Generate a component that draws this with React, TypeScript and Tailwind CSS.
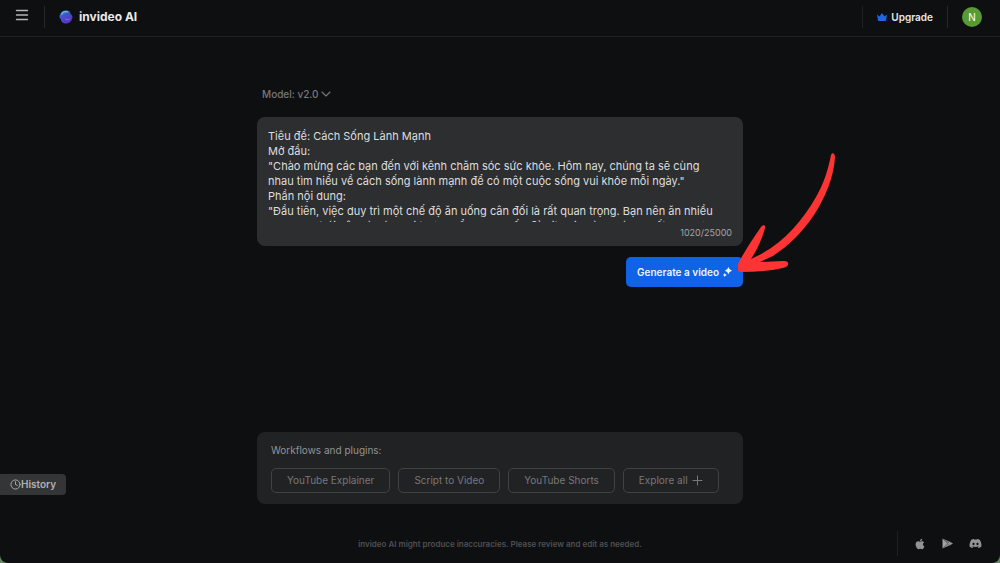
import { Clock } from "lucide-react"
import { FaApple, FaDiscord } from "react-icons/fa"

const script = `Tiêu đề: Cách Sống Lành Mạnh
Mở đầu:
"Chào mừng các bạn đến với kênh chăm sóc sức khỏe. Hôm nay, chúng ta sẽ cùng nhau tìm hiểu về cách sống lành mạnh để có một cuộc sống vui khỏe mỗi ngày."
Phần nội dung:
"Đầu tiên, việc duy trì một chế độ ăn uống cân đối là rất quan trọng. Bạn nên ăn nhiều rau xanh, trái cây và các loại thực phẩm cung cấp đủ vitamin và khoáng chất cho cơ thể."`

const plugins = ["YouTube Explainer", "Script to Video", "YouTube Shorts"]

function Logo() {
  return (
    <svg viewBox="0 0 28 28" className="size-[14px]" aria-hidden="true">
      <defs>
        <linearGradient id="orb" x1="0" y1="0" x2="0.7" y2="1">
          <stop offset="0" stopColor="#4a98d8" />
          <stop offset="0.4" stopColor="#4355cc" />
          <stop offset="1" stopColor="#5a2fc4" />
        </linearGradient>
      </defs>
      <path d="M3 8C5 2 11 0 16 1c4 0 7 3 7 7 4 2 5 6 3 10-1 5-6 9-12 9-5 0-10-3-10-8-4-3-4-8-1-11Z" fill="url(#orb)" />
      <path d="M5 8c3-4 8-6 12-4" stroke="#62b4e2" strokeWidth="3" fill="none" strokeLinecap="round" />
      <path d="M16 6c4-2 7 0 7 4-2 3-6 3-8 0Z" fill="#2f5fb0" />
      <path d="M13 18c2 2 5 2 8 0" stroke="#8d6cf0" strokeWidth="2" fill="none" strokeLinecap="round" />
    </svg>
  )
}

function Header() {
  return (
    <header className="flex h-[37px] shrink-0 items-center justify-between border-b border-[#1f2021] pr-[18px] pb-[2px] pl-[15px]">
      <div className="flex items-center">
        <button aria-label="Menu" className="pb-1">
          <svg viewBox="0 0 14 12" className="h-3 w-[14px]" stroke="#b5b6b7" strokeWidth="1.4" strokeLinecap="round" aria-hidden="true">
            <path d="M1.500 1.500h11M1.500 6h11M1.500 10.500h11" />
          </svg>
        </button>
        <div className="ml-[15px] h-[22px] w-px bg-[#252627]" />
        <a href="#" className="ml-[14px] flex items-center gap-[6px] text-[12px] leading-4 font-bold text-[#e8e8e9]">
          <Logo />
          invideo AI
        </a>
      </div>
      <div className="flex items-center">
        <div className="h-[22px] w-px bg-[#1f2021]" />
        <button className="mx-[14px] flex items-center gap-1 text-[10px] leading-4 font-semibold text-[#e8e8e9]">
          <svg viewBox="0 0 20 16" className="h-2 w-[10px]" fill="#1f66e5" aria-hidden="true">
            <path d="M0 3l5 4 5-7 5 7 5-4-2 12q0 1-1 1H3q-1 0-1-1Z" />
          </svg>
          Upgrade
        </button>
        <div className="h-[22px] w-px bg-[#252627]" />
        <button className="ml-[14px] size-5 rounded-full bg-[#589a33] text-[10px] leading-5 text-white">N</button>
      </div>
    </header>
  )
}

function Prompt() {
  return (
    <section>
      <button className="ml-[5px] flex items-center gap-[2px] text-[10px] leading-4 font-medium text-[#77787a]">
        Model: v2.0
        <svg viewBox="0 0 10 6" className="h-[6px] w-[10px]" fill="none" stroke="currentColor" strokeWidth="1.1" aria-hidden="true">
          <path d="M1 1l4 4 4-4" strokeLinecap="round" strokeLinejoin="round" />
        </svg>
      </button>
      <div className="mt-[15px] rounded-lg bg-[#2d2e30] px-[11px] pt-3 pb-[5px]">
        <textarea
          aria-label="Script"
          defaultValue={script}
          spellCheck={false}
          className="block h-[93px] w-full resize-none overflow-hidden pr-3 text-[11px] leading-[15px] text-[#dededf] outline-none"
        />
        <p className="mt-[3px] text-right text-[9px] leading-4 text-[#a4a5a6]">1020/25000</p>
      </div>
      <div className="relative mt-[11px] flex justify-end">
        <button className="flex h-[30px] items-center gap-1 rounded-[5px] bg-[#1062e6] px-[11px] text-[10px] font-semibold text-[#eef3fd]">
          Generate a video
          <svg viewBox="0 0 20 22" className="h-[10px] w-[9px]" fill="currentColor" aria-hidden="true">
            <path d="M12 0q1.500 6.500 8 8-6.500 1.500-8 8-1.500-6.500-8-8 6.500-1.500 8-8ZM4 13q1 3.500 4.500 4.500Q5 18.500 4 22 3 18.500-.5 17.500 3 16.500 4 13Z" />
          </svg>
        </button>
        <svg
          viewBox="0 0 100 120"
          className="pointer-events-none absolute -right-[95px] bottom-[15px] h-[120px] w-[100px]"
          fill="#fc3433"
          aria-hidden="true"
        >
          <path d="M93 3c1-3 4-2 4 2-1 20-10 41-21 58-12 18-26 31-41 41l-13 6 23-1c7-1 7 6 0 7-13 3-28 4-42 4-4 0-5-4-3-8 6-12 14-24 23-37 2-3 5-2 4 1-3 11-8 22-14 31 30-13 50-36 65-62 8-14 12-27 15-42Z" />
        </svg>
      </div>
    </section>
  )
}

function Workflows() {
  return (
    <section className="rounded-lg bg-[#212224] px-[14px] pt-[10px] pb-[11px] text-[10px] text-[#77787a]">
      <h2 className="leading-4 text-[#929394]">Workflows and plugins:</h2>
      <div className="mt-[10px] flex gap-2 whitespace-nowrap">
        {plugins.map((name) => (
          <button key={name} className="h-[25px] rounded-[5px] border border-[#404143] px-[15px]">
            {name}
          </button>
        ))}
        <button className="flex h-[25px] items-center gap-1 rounded-[5px] border border-[#404143] px-[15px]">
          Explore all
          <svg viewBox="0 0 11 11" className="size-[11px]" stroke="currentColor" strokeLinecap="round" aria-hidden="true">
            <path d="M5.500 1v9M1 5.500h9" />
          </svg>
        </button>
      </div>
    </section>
  )
}

export default function App() {
  return (
    <div className="bg-[#658565] font-['Inter',sans-serif]">
      <div className="relative flex min-h-screen flex-col rounded-b-lg bg-[#0e0f11]">
        <Header />
        <main className="mx-auto flex w-full max-w-[486px] flex-1 flex-col justify-between pt-[49px]">
          <Prompt />
          <Workflows />
        </main>
        <button className="absolute bottom-[68px] left-0 flex h-[21px] items-center rounded-r-[4px] bg-[#343536] px-[10px] text-[10px] font-semibold text-[#b0b1b2]">
          <Clock size={11} strokeWidth={2} />
          History
        </button>
        <footer className="grid h-[59px] shrink-0 grid-cols-[1fr_auto_1fr] items-center px-[18px] pt-5">
          <p className="col-start-2 text-[8px] leading-4 font-semibold text-[#4e4f51]">
            invideo AI might produce inaccuracies. Please review and edit as needed.
          </p>
          <div className="flex items-center justify-end gap-4 text-[#929394]">
            <div className="h-[25px] w-px bg-[#1f2021]" />
            <a href="#" aria-label="App Store">
              <FaApple size={12} />
            </a>
            <a href="#" aria-label="Google Play">
              <svg viewBox="0 0 22 22" className="size-[11px]" aria-hidden="true">
                <path d="M1 1v20l10-10Z" fill="#a0a1a2" />
                <path d="M1 1l10 10 4-4Z" fill="#747576" />
                <path d="M1 21l10-10 4 4Z" fill="#858687" />
                <path d="M15 7l-4 4 4 4 7-4Z" fill="#929394" />
              </svg>
            </a>
            <a href="#" aria-label="Discord">
              <FaDiscord size={13} />
            </a>
          </div>
        </footer>
      </div>
    </div>
  )
}
